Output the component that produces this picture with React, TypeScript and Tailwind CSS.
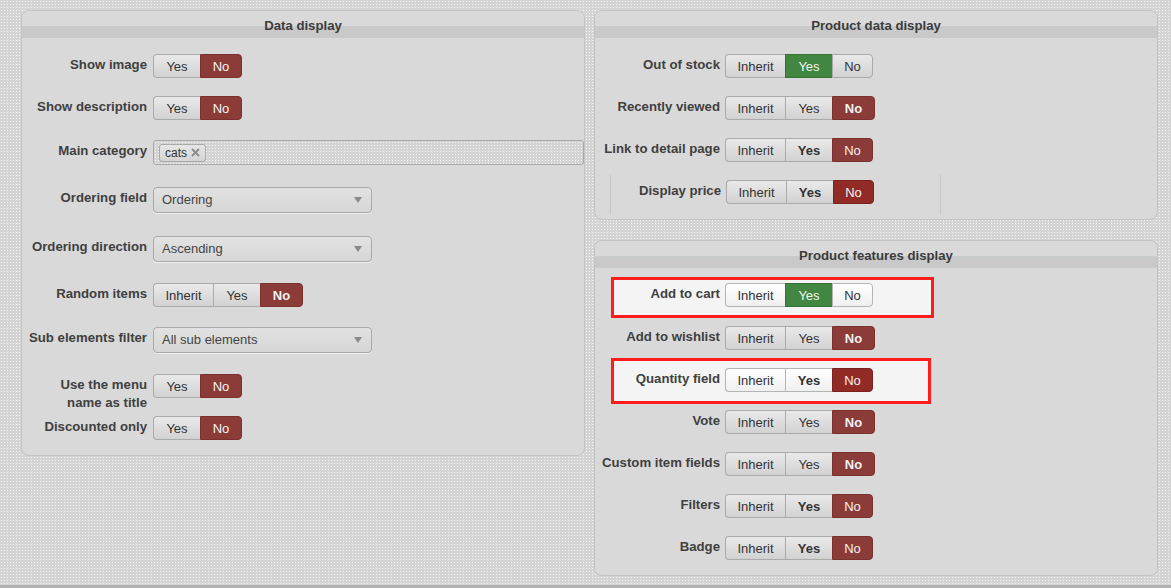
import React from 'react';

type Seg = {
  text: string;
  w: string;
  tone?: 'red' | 'darkred' | 'green';
  bold?: boolean;
};

const toneBg: Record<string, string> = {
  red: 'bg-[#8b3c38] border-[#7a302c] text-[#f2f2f2]',
  darkred: 'bg-[#922a25] border-[#7c221e] text-[#f4f4f4]',
  green: 'bg-[#418741] border-[#357335] text-[#f4f4f4]',
};

const Toggle: React.FC<{ segs: Seg[]; light?: boolean }> = ({ segs, light }) => {
  return (
    <div className="flex h-[24px] shrink-0">
      {segs.map((s, i) => {
        const first = i === 0;
        const last = i === segs.length - 1;
        const base = s.tone
          ? toneBg[s.tone]
          : light
            ? 'bg-[linear-gradient(#ffffff,#f0f0f0)] border-[#b4b4b4] text-[#333]'
            : 'bg-[linear-gradient(#e9e9e9,#d2d2d2)] border-[#aaaaaa] text-[#333]';
        return (
          <div
            key={i}
            className={`${s.w} ${base} flex items-center justify-center border-y text-[13px] leading-none ${
              first ? 'rounded-l-[4px] border-l' : 'border-l'
            } ${last ? 'rounded-r-[4px] border-r' : ''} ${s.bold ? 'font-bold' : ''}`}
          >
            {s.text}
          </div>
        );
      })}
    </div>
  );
};

const yesNo: Seg[] = [
  { text: 'Yes', w: 'w-[47px]' },
  { text: 'No', w: 'w-[42px]', tone: 'red' },
];

const tri = (yesBold: boolean, noTone: 'red' | 'darkred' | 'green' | undefined, noBold: boolean, yesGreen = false): Seg[] => [
  { text: 'Inherit', w: 'w-[60px]' },
  { text: 'Yes', w: 'w-[47px]', bold: yesBold, tone: yesGreen ? 'green' : undefined },
  { text: 'No', w: noBold ? 'w-[43px]' : 'w-[41px]', tone: noTone, bold: noBold },
];

const Label: React.FC<{ w: string; children: React.ReactNode }> = ({ w, children }) => (
  <div className={`${w} shrink-0 pt-[2px] text-right text-[13.2px] font-bold leading-[18px] text-[#404040]`}>
    {children}
  </div>
);

const Row: React.FC<{ label: React.ReactNode; lw?: string; gap?: string; className?: string; children: React.ReactNode }> = ({
  label,
  lw = 'w-[125px]',
  gap = 'gap-[6px]',
  className = '',
  children,
}) => (
  <div className={`flex items-start ${gap} ${className}`}>
    <Label w={lw}>{label}</Label>
    {children}
  </div>
);

const Select: React.FC<{ value: string }> = ({ value }) => (
  <div className="flex h-[26px] w-[219px] items-center justify-between rounded-[4px] border border-[#a9a9a9] bg-[linear-gradient(#e2e2e2,#d6d6d6)] pl-[8px] pr-[9px] text-[13px] text-[#444] shadow-[0_1px_0_#eeeeee]">
    <span>{value}</span>
    <svg width="8" height="6" viewBox="0 0 8 6">
      <path d="M0 0 L8 0 L4 6 Z" fill="#8a8a8a" />
    </svg>
  </div>
);

const Panel: React.FC<{ title: string; className?: string; children: React.ReactNode }> = ({ title, className = '', children }) => (
  <div className={`rounded-[8px] border border-[#c4c4c4] bg-[#d9d9d9] ${className}`}>
    <div className="h-[27px] rounded-t-[8px] bg-[linear-gradient(to_bottom,#d9d9d9_15px,#c6cccc_15px,#c6cccc_16px,#c9c9c9_16px)] pt-[7px] text-center text-[13.2px] font-bold leading-[16px] text-[#3c3c3c]">
      {title}
    </div>
    {children}
  </div>
);

const dots = 'bg-[#d4d4d4] bg-[radial-gradient(circle,#f4f4f4_0.8px,transparent_0.9px)] bg-[length:3px_3px]';

export default function App() {
  return (
    <div className={`flex h-[588px] w-[1171px] flex-col overflow-hidden ${dots}`} style={{ fontFamily: '"Liberation Sans", Arial, sans-serif' }}>
      <div className="flex items-start gap-[9px] pl-[21px] pt-[10px]">
        {/* Left column */}
        <Panel title="Data display" className="w-[564px] pb-[15px]">
          <Row label="Show image" className="mt-[16px]">
            <Toggle segs={yesNo} />
          </Row>
          <Row label="Show description" className="mt-[18px]">
            <Toggle segs={yesNo} />
          </Row>
          <Row label="Main category" className="mt-[20px]">
            <div className={`flex h-[25px] flex-1 items-center rounded-[3px] border border-[#a9a9a9] pl-[5px] ${dots}`}>
              <div className="flex h-[18px] items-center gap-[4px] rounded-[3px] border border-[#a9a9a9] bg-[linear-gradient(#e6e6e6,#d4d4d4)] px-[5px] text-[12px] text-[#333]">
                cats
                <svg width="9" height="9" viewBox="0 0 9 9">
                  <path d="M1 1 L8 8 M8 1 L1 8" stroke="#8c8c8c" strokeWidth="2" />
                </svg>
              </div>
            </div>
          </Row>
          <Row label="Ordering field" className="mt-[22px]">
            <Select value="Ordering" />
          </Row>
          <Row label="Ordering direction" className="mt-[23px]">
            <Select value="Ascending" />
          </Row>
          <Row label="Random items" className="mt-[21px]">
            <Toggle
              segs={[
                { text: 'Inherit', w: 'w-[60px]' },
                { text: 'Yes', w: 'w-[47px]' },
                { text: 'No', w: 'w-[43px]', tone: 'red', bold: true },
              ]}
            />
          </Row>
          <Row label="Sub elements filter" className="mt-[20px]">
            <Select value="All sub elements" />
          </Row>
          <Row
            label={
              <>
                Use the menu
                <br />
                name as title
              </>
            }
            className="mt-[21px]"
          >
            <Toggle segs={yesNo} />
          </Row>
          <Row label="Discounted only" className="mt-[4px]">
            <Toggle segs={yesNo} />
          </Row>
        </Panel>

        {/* Right column */}
        <div className="flex w-[564px] flex-col gap-[20px]">
          <Panel title="Product data display" className="pb-[4px]">
            <Row label="Out of stock" lw="w-[125px]" gap="gap-[5px]" className="mt-[16px]">
              <Toggle segs={tri(false, undefined, false, true)} />
            </Row>
            <Row label="Recently viewed" gap="gap-[5px]" className="mt-[18px]">
              <Toggle segs={tri(false, 'red', true)} />
            </Row>
            <Row label="Link to detail page" gap="gap-[5px]" className="mt-[18px]">
              <Toggle segs={tri(true, 'red', false)} />
            </Row>
            <div className="ml-[15px] mt-[13px] w-[331px] border-x border-[#c6c6c6] pb-[11px] pt-[5px]">
              <Row label="Display price" lw="w-[110px]" gap="gap-[5px]">
                <Toggle segs={tri(true, 'darkred', false)} />
              </Row>
            </div>
          </Panel>

          <Panel title="Product features display" className="pb-[15px]">
            <div className="ml-[16px] mt-[9px] w-[323px] border-[3px] border-[#ff1c1c] bg-[#f4f4f4] pb-[8px] pt-[3px]">
              <Row label="Add to cart" lw="w-[106px]" gap="gap-[5px]">
                <Toggle light segs={tri(false, undefined, false, true)} />
              </Row>
            </div>
            <Row label="Add to wishlist" gap="gap-[5px]" className="mt-[8px]">
              <Toggle segs={tri(false, 'red', true)} />
            </Row>
            <div className="ml-[16px] mt-[8px] w-[320px] border-[3px] border-[#ff1c1c] bg-[#f4f4f4] pb-[9px] pt-[7px]">
              <Row label="Quantity field" lw="w-[106px]" gap="gap-[5px]">
                <Toggle light segs={tri(true, 'darkred', false)} />
              </Row>
            </div>
            <Row label="Vote" gap="gap-[5px]" className="mt-[6px]">
              <Toggle segs={tri(false, 'red', true)} />
            </Row>
            <Row label="Custom item fields" gap="gap-[5px]" className="mt-[18px]">
              <Toggle segs={tri(false, 'red', true)} />
            </Row>
            <Row label="Filters" gap="gap-[5px]" className="mt-[18px]">
              <Toggle segs={tri(true, 'red', false)} />
            </Row>
            <Row label="Badge" gap="gap-[5px]" className="mt-[18px]">
              <Toggle segs={tri(true, 'red', false)} />
            </Row>
          </Panel>
        </div>
      </div>
      <div className="mt-auto h-[3px] bg-[#b2b2b2]" />
    </div>
  );
}
